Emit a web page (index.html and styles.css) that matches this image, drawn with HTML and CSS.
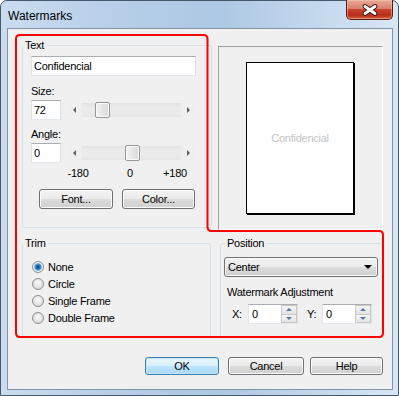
FILE: index.html
```html
<!DOCTYPE html>
<html>
<head>
<meta charset="utf-8">
<link rel="stylesheet" href="styles.css">
</head>
<body>
<div class="window">
  <!-- barra de titulo -->
  <div class="titlebar">
    <span class="title">Watermarks</span>
    <div class="close">
      <svg width="47" height="20" viewBox="0 0 47 20">
        <path d="M19 6.5 L29 13.5 M29 6.5 L19 13.5" stroke="#40170f" stroke-width="4.8" stroke-linecap="round"/>
        <path d="M19 6.5 L29 13.5 M29 6.5 L19 13.5" stroke="#ffffff" stroke-width="2.8" stroke-linecap="round"/>
      </svg>
    </div>
  </div>

  <div class="client">
    <div class="row-top">
      <fieldset class="group text-group">
        <legend>Text</legend>
        <div class="body">
          <div class="textbox wide">Confidencial</div>
          <div class="label size-label">Size:</div>
          <div class="slider-row">
            <div class="textbox small">72</div>
            <div class="slider">
              <span class="arrow-area"><span class="tri-left"></span></span>
              <span class="track"><span class="thumb thumb-size"></span></span>
              <span class="arrow-area"><span class="tri-right"></span></span>
            </div>
          </div>
          <div class="label angle-label">Angle:</div>
          <div class="slider-row">
            <div class="textbox small">0</div>
            <div class="slider">
              <span class="arrow-area"><span class="tri-left"></span></span>
              <span class="track"><span class="thumb thumb-angle"></span></span>
              <span class="arrow-area"><span class="tri-right"></span></span>
            </div>
          </div>
          <div class="ticks">
            <span class="tick t1">-180</span>
            <span class="tick t2">0</span>
            <span class="tick t3">+180</span>
          </div>
          <div class="text-buttons">
            <div class="btn btn-font">Font...</div>
            <div class="btn btn-color">Color...</div>
          </div>
        </div>
      </fieldset>

      <div class="preview">
        <div class="paper">Confidencial</div>
      </div>
    </div>

    <div class="row-bottom">
      <fieldset class="group trim-group">
        <legend>Trim</legend>
        <div class="body">
          <div class="radio-row"><span class="radio checked"></span>None</div>
          <div class="radio-row"><span class="radio"></span>Circle</div>
          <div class="radio-row"><span class="radio"></span>Single Frame</div>
          <div class="radio-row"><span class="radio"></span>Double Frame</div>
        </div>
      </fieldset>

      <fieldset class="group position-group">
        <legend>Position</legend>
        <div class="body">
          <div class="combo">Center<span class="combo-arrow"></span></div>
          <div class="label adj-label">Watermark Adjustment</div>
          <div class="spin-row">
            <span class="spin-label">X:</span>
            <div class="spin">
              <span class="spin-value">0</span>
              <span class="spin-btns"><span class="spin-up"><i></i></span><span class="spin-down"><i></i></span></span>
            </div>
            <span class="spin-label y">Y:</span>
            <div class="spin">
              <span class="spin-value">0</span>
              <span class="spin-btns"><span class="spin-up"><i></i></span><span class="spin-down"><i></i></span></span>
            </div>
          </div>
        </div>
      </fieldset>
    </div>

    <div class="dialog-buttons">
      <div class="btn btn-ok default">OK</div>
      <div class="btn btn-cancel">Cancel</div>
      <div class="btn btn-help">Help</div>
    </div>
  </div>

  <!-- marca roja encima de los grupos -->
  <svg class="highlight" width="399" height="396" viewBox="0 0 399 396">
    <path d="M16 39 Q16 35 20 35 H203.5 Q207.5 35 207.5 39 V227 Q207.5 231 211.5 231 H379 Q383 231 383 235 V333 Q383 337 379 337 H20 Q16 337 16 333 Z"
          fill="none" stroke="#ff0000" stroke-width="2"/>
  </svg>
</div>
</body>
</html>
```

FILE: styles.css
```css
* {
  box-sizing: border-box;
}

body {
  margin: 0;
  background: #ffffff;
  font-family: "Liberation Sans", Arial, sans-serif;
  font-size: 11px;
  letter-spacing: -0.25px;
  color: #000;
}

.window {
  position: relative;
  width: 399px;
  height: 396px;
  border: 1px solid #46586c;
  border-radius: 7px 7px 0 0;
  background: linear-gradient(to right, #cadcf0 0%, #b6cee8 30%, #adc8e4 55%, #c4d8ed 80%, #d8e6f4 100%);
  display: flex;
  flex-direction: column;
  padding: 0 5px 5px 6px;
}

/* barra de titulo */
.titlebar {
  height: 27px;
  display: flex;
  align-items: flex-start;
  justify-content: space-between;
}

.title {
  font-size: 12px;
  letter-spacing: 0;
  line-height: 14px;
  margin-top: 8px;
  margin-left: 1px;
}

.close {
  width: 47px;
  height: 20px;
  margin-top: -1px;
  border: 1px solid #5b1c13;
  border-top: none;
  border-radius: 0 0 5px 5px;
  background: linear-gradient(#e9a898 0%, #d9806d 45%, #c8442e 50%, #b82d19 80%, #d4603f 100%);
  box-shadow: inset 0 0 0 1px rgba(255, 210, 200, 0.45);
}

.close svg {
  display: block;
  margin-left: -1px;
}

/* area cliente */
.client {
  flex: 1;
  border: 1px solid #8495a8;
  background: #f0f0f0;
  display: flex;
  flex-direction: column;
}

.row-top {
  display: flex;
  align-items: flex-start;
  gap: 6px;
  margin-top: 10px;
  margin-left: 14px;
}

.row-bottom {
  display: flex;
  gap: 9px;
  margin-top: 7px;
  margin-left: 14px;
}

.group {
  margin: 0;
  padding: 0;
  min-width: 0;
  border: 1px solid #d5dfe5;
  border-radius: 3px;
}

.group legend {
  padding: 0 2px;
  line-height: 13px;
}

.label {
  line-height: 13px;
}

.text-group {
  width: 190px;
}

.text-group .body {
  padding: 4px 15px 18px 8px;
}

.textbox {
  background: #fff;
  border: 1px solid;
  border-color: #abadb3 #dbdfe6 #e3e9ef #e2e3ea;
  height: 20px;
  line-height: 18px;
  padding-left: 2px;
}

.textbox.wide {
  width: 165px;
}

.textbox.small {
  width: 30px;
  flex: none;
}

.size-label {
  margin-top: 9px;
}

.angle-label {
  margin-top: 8px;
}

.slider-row {
  display: flex;
  align-items: center;
  gap: 6px;
  margin-top: 2px;
}

.slider {
  width: 129px;
  height: 14px;
  display: flex;
  background: linear-gradient(#e3e3e3, #ebebeb 30%, #ebebeb 70%, #e6e6e6);
}

.arrow-area {
  width: 15px;
  display: flex;
  align-items: center;
  justify-content: center;
  background: #efefef;
}

.tri-left {
  width: 0;
  height: 0;
  border-top: 3px solid transparent;
  border-bottom: 3px solid transparent;
  border-right: 3px solid #5e5e5e;
}

.tri-right {
  width: 0;
  height: 0;
  border-top: 3px solid transparent;
  border-bottom: 3px solid transparent;
  border-left: 3px solid #5e5e5e;
}

.track {
  flex: 1;
  display: flex;
  align-items: center;
}

.thumb {
  width: 15px;
  height: 16px;
  border: 1px solid #979797;
  border-radius: 2px;
  background: linear-gradient(to right, #f4f4f4, #e6e6e6 50%, #dadada);
  box-shadow: inset 0 0 0 1px #fbfbfb;
}

.thumb-size {
  margin-left: 13px;
}

.thumb-angle {
  margin-left: 43px;
}

.ticks {
  display: flex;
  margin-top: 4px;
  line-height: 13px;
}

.tick {
  text-align: center;
}

.t1 {
  width: 24px;
  margin-left: 35px;
}

.t2 {
  width: 24px;
  margin-left: 28px;
}

.t3 {
  width: 30px;
  margin-left: 18px;
}

.text-buttons {
  display: flex;
  gap: 9px;
  margin-top: 9px;
  margin-left: 8px;
}

.btn {
  height: 20px;
  border: 1px solid #707070;
  border-radius: 3px;
  background: linear-gradient(#f2f2f2 0%, #ebebeb 50%, #dddddd 50%, #cfcfcf 100%);
  box-shadow: inset 0 0 0 1px #fcfcfc;
  display: flex;
  align-items: center;
  justify-content: center;
}

.btn-font {
  width: 74px;
}

.btn-color {
  width: 73px;
}

/* vista previa */
.preview {
  width: 165px;
  height: 184px;
  margin-top: 7px;
  border: 1px solid;
  border-color: #a0a0a0 #ffffff #ffffff #a0a0a0;
  display: flex;
  align-items: center;
  justify-content: center;
}

.paper {
  width: 108px;
  height: 152px;
  border: 1px solid #000;
  box-shadow: 1px 1px 0 #000;
  background: #fff;
  color: #c4c4c4;
  display: flex;
  align-items: center;
  justify-content: center;
  margin-left: -1px;
}

/* grupo trim */
.trim-group {
  width: 189px;
}

.trim-group .body {
  padding: 8px 0 11px 9px;
}

.radio-row {
  height: 17px;
  display: flex;
  align-items: center;
}

.radio {
  width: 12px;
  height: 12px;
  border-radius: 50%;
  border: 1px solid #8d8d8d;
  background: radial-gradient(circle at 50% 40%, #fbfbfb 0, #e6e6e6 50%, #cfcfcf 100%);
  margin-right: 4px;
}

.radio.checked {
  background: radial-gradient(circle, #124a7c 0, #1f65a3 1.6px, #4b98d4 3px, #9dcdf0 3.8px, #f6f6f6 4.4px, #dedede 6px);
}

/* grupo posicion */
.position-group {
  width: 163px;
}

.position-group legend {
  margin-left: 4px;
}

.position-group .body {
  padding: 7px 4px 0 3px;
}

.combo {
  height: 20px;
  border: 1px solid #707070;
  border-radius: 3px;
  background: linear-gradient(#f2f2f2 0%, #ebebeb 50%, #dddddd 50%, #cfcfcf 100%);
  box-shadow: inset 0 0 0 1px #fcfcfc;
  display: flex;
  align-items: center;
  justify-content: space-between;
  padding: 0 5px 0 3px;
}

.combo-arrow {
  width: 0;
  height: 0;
  border-left: 4px solid transparent;
  border-right: 4px solid transparent;
  border-top: 4px solid #000;
}

.adj-label {
  margin-top: 9px;
  margin-left: 3px;
}

.spin-row {
  display: flex;
  align-items: center;
  margin-top: 5px;
  padding-left: 8px;
}

.spin-label {
  width: 16px;
}

.spin-label.y {
  width: 15px;
  margin-left: 9px;
}

.spin {
  width: 50px;
  height: 20px;
  background: #fff;
  border: 1px solid;
  border-color: #abadb3 #dbdfe6 #e3e9ef #e2e3ea;
  display: flex;
  justify-content: space-between;
}

.spin-value {
  padding-left: 3px;
  line-height: 18px;
}

.spin-btns {
  width: 16px;
  display: flex;
  flex-direction: column;
}

.spin-up,
.spin-down {
  flex: 1;
  border: 1px solid #c9c9c9;
  background: linear-gradient(#f4f4f4, #e4e4e4);
  display: flex;
  align-items: center;
  justify-content: center;
}

.spin-down {
  border-top: none;
}

.spin-up i {
  width: 0;
  height: 0;
  border-left: 3px solid transparent;
  border-right: 3px solid transparent;
  border-bottom: 3px solid #5676a6;
}

.spin-down i {
  width: 0;
  height: 0;
  border-left: 3px solid transparent;
  border-right: 3px solid transparent;
  border-top: 3px solid #5676a6;
}

/* botones del dialogo */
.dialog-buttons {
  display: flex;
  justify-content: flex-end;
  margin-top: 19px;
  padding-right: 9px;
}

.dialog-buttons .btn {
  height: 18px;
}

.btn-ok {
  width: 74px;
}

.btn-cancel {
  width: 76px;
  margin-left: 9px;
}

.btn-help {
  width: 73px;
  margin-left: 6px;
}

.btn.default {
  border-color: #3c7fb1;
  background: linear-gradient(#eaf6fd 0%, #d9f0fc 50%, #bee6fd 50%, #a7d9f5 100%);
  box-shadow: inset 0 0 0 1px #c4e5f6;
}

/* marca roja */
.highlight {
  position: absolute;
  left: -1px;
  top: -1px;
  pointer-events: none;
}
```
